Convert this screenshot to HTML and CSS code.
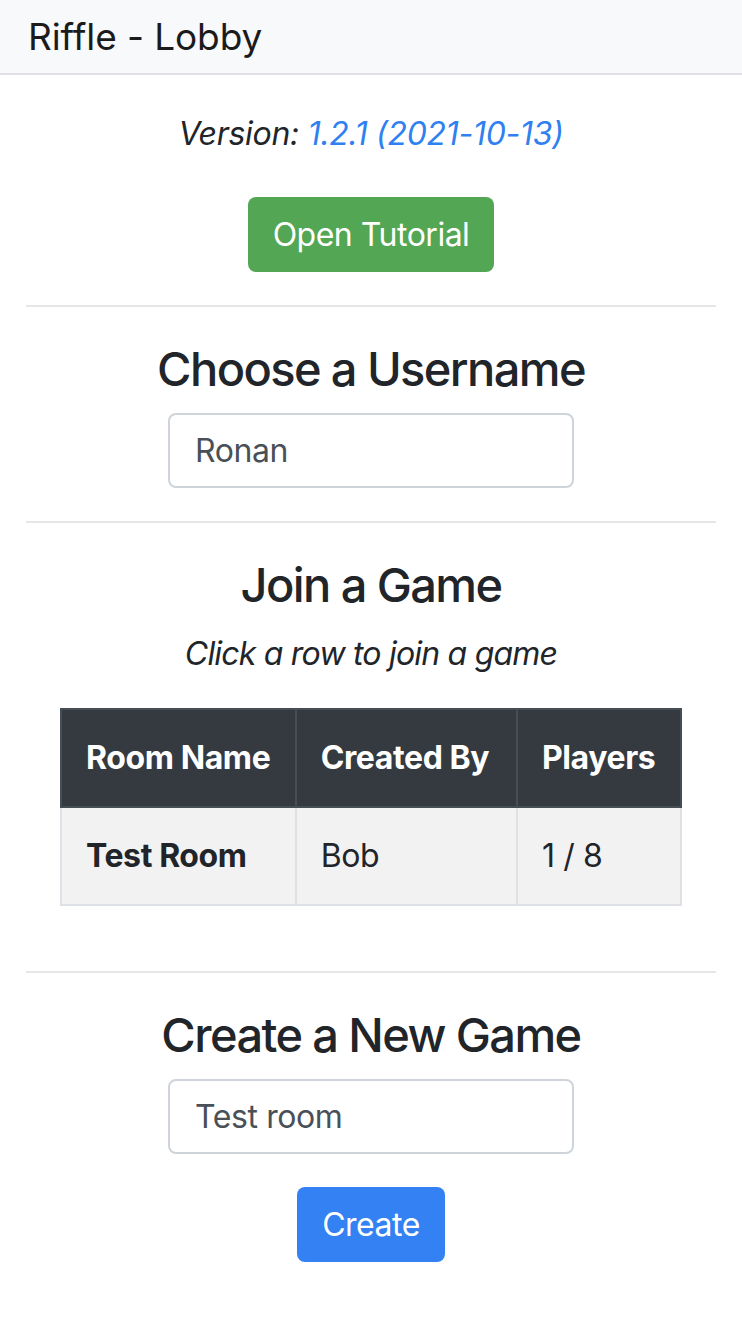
FILE: index.html
```html
<!DOCTYPE html>
<html lang="en">
<head>
<meta charset="utf-8">
<title>Riffle - Lobby</title>
<link rel="stylesheet" href="styles.css">
</head>
<body>
<nav class="navbar"><span class="brand">Riffle - Lobby</span></nav>
<main class="page">
  <p class="version">Version: <a class="version-link" href="#">1.2.1 (2021-10-13)</a></p>
  <div class="center"><button class="btn btn-success">Open Tutorial</button></div>
  <hr class="divider">
  <h3 class="title">Choose a Username</h3>
  <div class="center"><input class="field" type="text" value="Ronan"></div>
  <hr class="divider">
  <h3 class="title title-join">Join a Game</h3>
  <p class="hint">Click a row to join a game</p>
  <div class="center">
    <table class="rooms">
      <thead>
        <tr><th class="c1">Room Name</th><th class="c2">Created By</th><th class="c3">Players</th></tr>
      </thead>
      <tbody>
        <tr><td class="room">Test Room</td><td>Bob</td><td>1 / 8</td></tr>
      </tbody>
    </table>
  </div>
  <hr class="divider divider-wide">
  <h3 class="title">Create a New Game</h3>
  <div class="center"><input class="field" type="text" value="Test room"></div>
  <div class="center"><button class="btn btn-primary">Create</button></div>
</main>
</body>
</html>
```
FILE: styles.css
```css
* { box-sizing: border-box; }
body {
  margin: 0;
  font-family: Inter, "Liberation Sans", sans-serif;
  font-size: 32px;
  line-height: 1.5;
  color: #212529;
  background: #fff;
}
.navbar {
  height: 75px;
  background: #f8f9fa;
  border-bottom: 2px solid #dfe1e4;
  padding: 0 28px;
  display: flex;
  align-items: center;
}
.brand {
  font-size: 37px;
  color: #1b1b1b;
  letter-spacing: -0.1px;
}
.page { padding: 0 26px; }
.center { display: flex; justify-content: center; }
.version {
  margin: 35px 0 0;
  text-align: center;
  font-style: italic;
  letter-spacing: -0.3px;
}
.version-link { color: #2f80f0; text-decoration: none; }
.btn {
  font-family: inherit;
  font-size: 32px;
  line-height: 47px;
  padding: 12px 23px;
  border: 2px solid transparent;
  border-radius: 8px;
  color: #fff;
  letter-spacing: -0.5px;
}
.btn-success { background: #53a653; margin-top: 39px; }
.btn-primary { background: #3381f3; margin-top: 33px; }
.divider {
  margin: 33px 0 0;
  border: 0;
  border-top: 2px solid #e6e6e6;
}
.divider-wide { margin-top: 65px; }
.title {
  margin: 28px 0 0;
  text-align: center;
  font-size: 47px;
  font-weight: 500;
  line-height: 67px;
  letter-spacing: -1.6px;
}
.field {
  display: block;
  margin-top: 11px;
  width: 406px;
  height: 75px;
  padding: 0 25px;
  font-family: inherit;
  font-size: 32px;
  color: #495057;
  border: 2px solid #ced4da;
  border-radius: 8px;
  background: #fff;
  letter-spacing: -0.4px;
}
.hint {
  margin: 12px 0 0;
  text-align: center;
  font-style: italic;
  letter-spacing: -0.8px;
}
.rooms {
  margin-top: 30px;
  border-collapse: collapse;
  width: 622px;
  text-align: left;
  letter-spacing: -0.4px;
}
.rooms th, .rooms td {
  padding: 24px 24px;
  line-height: 48px;
  vertical-align: top;
}
.rooms th {
  background: #343a40;
  color: #fff;
  font-weight: 700;
  border: 2px solid #454d55;
}
.rooms td {
  background: #f2f2f2;
  border: 2px solid #dee2e6;
}
.rooms .room { font-weight: 700; }
.c1 { width: 236px; }
.c2 { width: 222px; }
.c3 { width: 164px; }
```
